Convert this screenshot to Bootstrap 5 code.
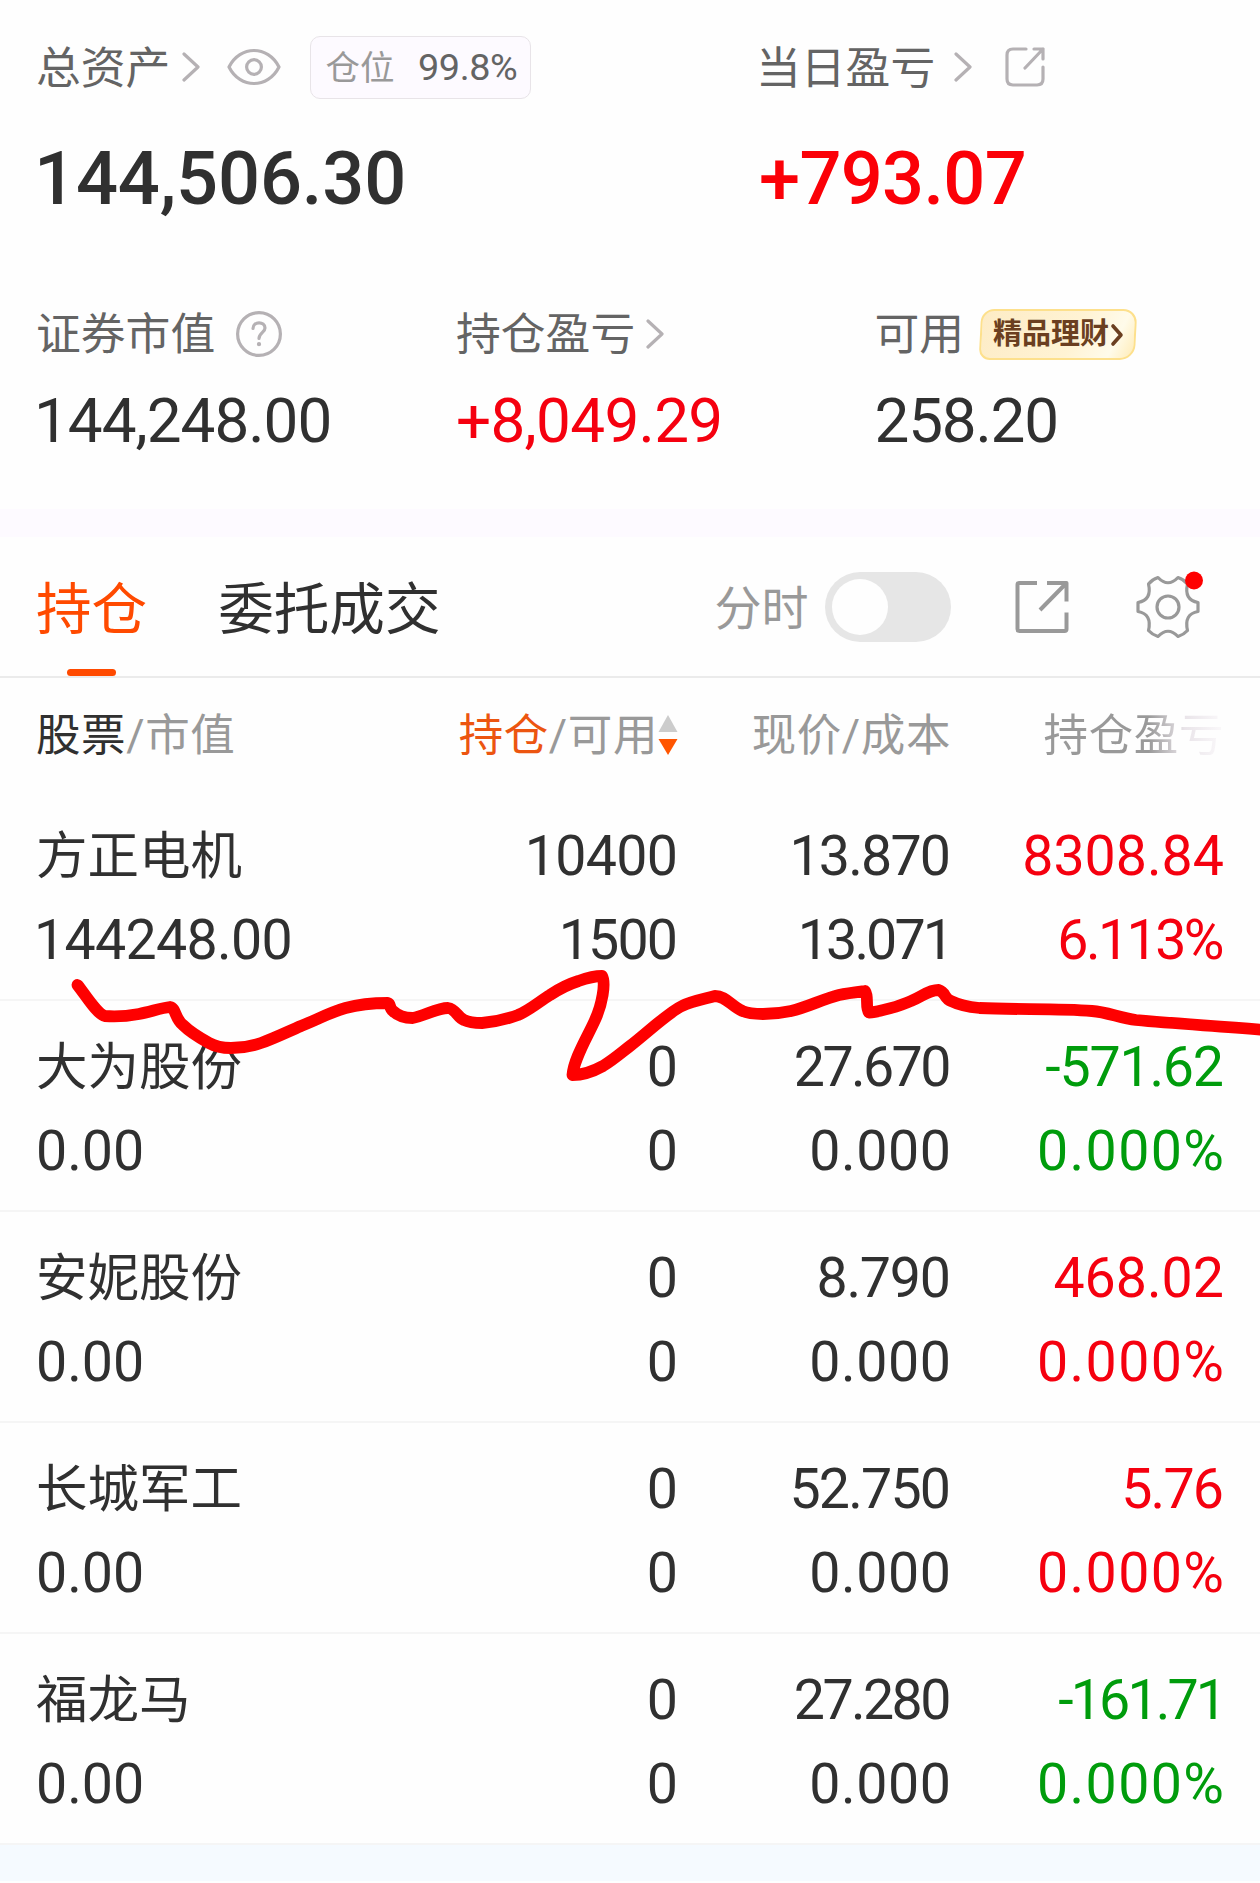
<!DOCTYPE html>
<html lang="zh-CN">
<head>
<meta charset="utf-8">
<meta name="viewport" content="width=device-width, initial-scale=1">
<title>持仓</title>
<link href="https://cdn.jsdelivr.net/npm/bootstrap@5.3.0/dist/css/bootstrap.min.css" rel="stylesheet">
<style>
body{font-family:Roboto,"Noto Sans CJK SC",sans-serif;color:#303030;background:#fefefe;line-height:1;overflow:hidden}
.screen{width:1260px;height:1883px}
.icon{display:block;flex:none;fill:none;stroke:#b5b1b4;stroke-width:3.2;stroke-linecap:round;stroke-linejoin:round}
.up{color:#f5000f}.down{color:#009c0c}.mute{color:#999}
.cap{font-size:44.8px;color:#646464;white-space:nowrap}
.total-head{height:64px;margin-top:35px}
.total-head>.cap,.total-head .lead-in{padding-top:4px}
.lead-in{margin-left:36px}
.assets-head{width:756px}
.share{height:63px;width:221px;border:1px solid #e8e4e8;border-radius:10px;background:#fdfaff;padding:0 13px 0 14px;margin-left:29px}
.share-name{font-size:34.5px;color:#999;padding-top:2px}
.share-num{font-size:37.8px;color:#646464;letter-spacing:-.4px;padding-top:1px}
.chev1{margin-left:11px}.eye{margin-left:26px}
.chev2{margin-left:18px}.share1{margin-left:32px}
.total-nums{height:76px;margin-top:42px;font-size:74px;font-weight:500}
.total-nums .up{color:#fb0007;letter-spacing:-.7px}
.assets-num{width:725px;margin-left:34px;letter-spacing:-.15px}
.sub-sums{margin-top:89px;margin-left:36px}
.third{width:420px}
.sub-sums .cap{height:56px}
.cap-word{padding-top:2px}
.help{margin-left:20px}.chev3{margin-left:10px}
.val{font-size:62px;height:66px;line-height:66px;margin-top:26px}
.first-one{margin-left:-2px}
.promo{width:156px;height:51px;margin-left:16px;border:2.5px solid #fde08c;border-radius:13px 14px 15px 11px;background:linear-gradient(115deg,#fdecc6,#fff3d4 60%,#fffbea 85%,#ffecb8);font-size:29px;font-weight:700;color:#6b3f20;padding-left:11px;transform:skewX(-3deg)}
.promo>*{transform:skewX(3deg)}
.prom-c{stroke:#6b3f20;stroke-width:3.6;margin-left:1px}
.last-third{margin-left:-1.5px}
.band{height:28px;background:#fdfaff;margin-top:55px}
.tabs{height:141px;border-bottom:2px solid #ebebeb;padding-left:36px}
.tab{font-size:55.6px;height:139px;padding:43px 0 0;line-height:60px}
.tab-on{color:#ff4a00}
.tab-on::after{content:"";display:block;width:49px;height:7px;border-radius:4px;background:#ff4a00;margin:29px auto 0}
.tab-b{margin-left:71px}
.tools{margin-left:274px;height:139px}
.minute{font-size:47px;margin-right:16px;padding-top:3px}
.switch{width:126px;height:70px;border-radius:35px;background:#e6e6e6;padding:7px}
.knob{width:56px;height:56px;border-radius:50%;background:#fefefe}
.ext{margin-left:63px;stroke:#999;stroke-width:4;stroke-linecap:butt}
.gear{margin-left:64px;stroke:#999}
.c1{width:340px;padding-left:36px}.c2{width:338px}.c3,.c4{width:273px}
.c2,.c3,.c4{display:flex;flex-direction:column;align-items:flex-end}
.heads{height:112px;font-size:44.5px;letter-spacing:.6px;color:#999;padding-top:33px;line-height:50px;white-space:nowrap}
.text-ink{color:#303030}.sorted{color:#ec5510}
.fade-end{background:linear-gradient(90deg,#999 58%,#e9e4e9 78%,#fbf9fb);-webkit-background-clip:text;background-clip:text;color:transparent}
.stock{height:211px;border-bottom:2px solid #f5f5f5;font-size:55.5px;padding-top:37px}
.stock span{display:block;line-height:60px;height:60px;margin-bottom:24px}
.stock .nm{font-size:51.5px}
.foot{height:36px;background:#f5faff}
.k-34{letter-spacing:-2.9px;margin-right:0}
.k-28{letter-spacing:-2.6px;margin-right:2.2px}.k-20{letter-spacing:-1.8px;margin-right:1.8px}
.k-13{letter-spacing:-1.2px;margin-right:1.2px}.k-6{letter-spacing:-.7px;margin-right:.7px}
.k-10{letter-spacing:-1px}
.k6{letter-spacing:.6px;margin-right:-.6px}.k15{letter-spacing:1.4px;margin-right:-1.4px}
.scribble{left:0;top:960px;pointer-events:none}
</style>
<script src="https://cdn.jsdelivr.net/npm/bootstrap@5.3.0/dist/js/bootstrap.bundle.min.js"></script>
</head>
<body>
<main class="screen position-relative overflow-hidden d-flex flex-column">
  <section class="d-flex align-items-center total-head">
    <div class="assets-head d-flex align-items-center">
      <span class="cap lead-in">总资产</span>
      <svg class="icon chev1" width="20" height="30" viewBox="0 0 20 30"><path d="M3 2L17 15L3 28"/></svg>
      <svg class="icon eye" width="54" height="38" viewBox="0 0 54 38"><path d="M2 19C13-3 41-3 52 19C41 41 13 41 2 19Z"/><circle cx="27" cy="19" r="7.4"/></svg>
      <div class="share d-flex align-items-center justify-content-between"><span class="share-name">仓位</span><span class="share-num">99.8%</span></div>
    </div>
    <span class="cap">当日盈亏</span>
    <svg class="icon chev2" width="20" height="30" viewBox="0 0 20 30"><path d="M3 2L17 15L3 28"/></svg>
    <svg class="icon share1" width="40" height="40" viewBox="0 0 40 40"><path d="M21 2H8Q2 2 2 8V32Q2 38 8 38H32Q38 38 38 32V20M38 12V2H29M38 2L20 21"/></svg>
  </section>
  <section class="d-flex align-items-center total-nums">
    <div class="assets-num">144,506.30</div><div class="up">+793.07</div>
  </section>
  <section class="d-flex sub-sums">
    <div class="third">
      <div class="cap d-flex align-items-center"><span class="cap-word">证券市值</span><svg class="icon help" width="48" height="48" viewBox="0 0 48 48"><circle cx="24" cy="24" r="21.4"/><path d="M18 18.500C18 11 30 11 30 18C30 22.500 24 23 24 28.500"/><circle cx="24" cy="34.200" r="1.400" fill="#b5b1b4" stroke-width="1.500"/></svg></div>
      <div class="val k-10 first-one">144,248.00</div>
    </div>
    <div class="third">
      <div class="cap d-flex align-items-center"><span class="cap-word">持仓盈亏</span><svg class="icon chev3" width="20" height="30" viewBox="0 0 20 30"><path d="M3 2L17 15L3 28"/></svg></div>
      <div class="val up k-6">+8,049.29</div>
    </div>
    <div class="last-third">
      <div class="cap d-flex align-items-center"><span class="cap-word">可用</span><div class="promo d-flex align-items-center"><span>精品理财</span><svg class="icon prom-c" width="15" height="24" viewBox="0 0 15 24"><path d="M3 3L11 12L3 21"/></svg></div></div>
      <div class="val k-13">258.20</div>
    </div>
  </section>
  <div class="band flex-shrink-0"></div>
  <nav class="tabs d-flex flex-shrink-0">
    <div class="tab tab-on">持仓</div>
    <div class="tab tab-b">委托成交</div>
    <div class="d-flex align-items-center tools">
      <span class="mute minute">分时</span>
      <div class="switch"><div class="knob"></div></div>
      <svg class="icon ext" width="56" height="56" viewBox="0 0 56 56"><path d="M23 4H5Q3.500 4 3.500 6V50Q3.500 52 5.500 52H50.500Q52.500 52 52.500 50V33.500M52.500 22.500V4H33M52.500 4L26 31"/></svg>
      <svg class="icon gear" width="72" height="72" viewBox="0 0 72 72"><path d="M24 6.500Q34 17 44 6.500Q50 8.500 53.500 13Q49.800 29 64 31.500V40.500Q49.800 43 53.500 59.500Q50 63.500 44 65.500Q34 55 24 65.500Q18 63.500 14.500 59.500Q18.200 43 4 40.500V31.500Q18.200 29 14.500 13Q18 8.500 24 6.500Z"/><circle cx="34" cy="36" r="11"/><circle cx="60" cy="9.500" r="9" fill="#fe0000" stroke="none"/></svg>
    </div>
  </nav>
  <section class="d-flex heads flex-shrink-0">
    <div class="c1"><span class="text-ink">股票</span>/市值</div>
    <div class="c2"><div class="d-flex align-items-center"><span class="sorted">持仓</span>/可用<svg class="sort" width="20" height="42" viewBox="0 0 20 42"><path d="M10 0L19.500 17H.5Z" fill="#ccc"/><path d="M10 40L19.500 24H.5Z" fill="#ff5500"/></svg></div></div>
    <div class="c3">现价/成本</div>
    <div class="c4"><div class="fade-end">持仓盈亏</div></div>
  </section>
  <section class="d-flex stock flex-shrink-0">
    <div class="c1"><span class="nm">方正电机</span><span class="k-6 first-one">144248.00</span></div>
    <div class="c2"><span class="k-6">10400</span><span class="k-20">1500</span></div>
    <div class="c3"><span class="k-20">13.870</span><span class="k-34">13.071</span></div>
    <div class="c4 up"><span>8308.84</span><span class="k-28">6.113%</span></div>
  </section>
  <section class="d-flex stock flex-shrink-0">
    <div class="c1"><span class="nm">大为股份</span><span>0.00</span></div>
    <div class="c2"><span>0</span><span>0</span></div>
    <div class="c3"><span class="k-28">27.670</span><span class="k6">0.000</span></div>
    <div class="c4 down"><span class="k-13">-571.62</span><span class="k15">0.000%</span></div>
  </section>
  <section class="d-flex stock flex-shrink-0">
    <div class="c1"><span class="nm">安妮股份</span><span>0.00</span></div>
    <div class="c2"><span>0</span><span>0</span></div>
    <div class="c3"><span class="k-13">8.790</span><span class="k6">0.000</span></div>
    <div class="c4 up"><span>468.02</span><span class="k15">0.000%</span></div>
  </section>
  <section class="d-flex stock flex-shrink-0">
    <div class="c1"><span class="nm">长城军工</span><span>0.00</span></div>
    <div class="c2"><span>0</span><span>0</span></div>
    <div class="c3"><span class="k-20">52.750</span><span class="k6">0.000</span></div>
    <div class="c4 up"><span class="k-20">5.76</span><span class="k15">0.000%</span></div>
  </section>
  <section class="d-flex stock flex-shrink-0">
    <div class="c1"><span class="nm">福龙马</span><span>0.00</span></div>
    <div class="c2"><span>0</span><span>0</span></div>
    <div class="c3"><span class="k-28">27.280</span><span class="k6">0.000</span></div>
    <div class="c4 down"><span class="k-34">-161.71</span><span class="k15">0.000%</span></div>
  </section>
  <div class="foot flex-shrink-0"></div>
  <!-- hand-drawn marker line -->
  <svg class="scribble position-absolute" width="1260" height="130" viewBox="0 960 1260 130" fill="none" stroke="#fe0000" stroke-width="11.800" stroke-linecap="round" stroke-linejoin="round"><path d="M77.500 985C87 997 97 1014 105 1016C116 1017 128 1016 139 1014C150 1012 161 1008 170 1007C176 1008 175 1019 183 1025C191 1033 200 1038 209 1043C216 1047 223 1048 231 1048C242 1048 252 1046 261 1043C275 1038 287 1032 301 1026C316 1020 331 1012 345.500 1008C360 1004 374 1003 388 1003C391 1004 389 1008 393 1011C399 1017 406 1018 412.600 1018C424 1016 437 1008 448 1008C456 1009 457 1017 464 1020C470 1023 476 1023 482 1023C495 1022 507 1019 518 1015C530 1010 540 1001 550 995C559 989 569 984 578.500 981C587 978 595 976 602 976C606 983 602 1005 595 1020C588 1036 574 1058 572.500 1075C583 1075 594 1071 603 1066C613 1060 621 1053 630 1046C648 1032 669 1012 682 1006C692 1001 704 999 715 996C726 996 731 1006 742.500 1011C749 1014 756 1014 763 1014C773 1014 782 1013 791 1011C808 1007 823 999 839 995C848 993 857 992 865 991C869 997 865 1007 869 1012.500C879 1012 900 1006 911 1001C922 997 928 990 938.500 990C946 992 944 999 951 1001C959 1005 969 1007 979.500 1008C1017 1010 1057 1008 1092 1011C1107 1012 1120 1018 1136 1020C1177 1024 1220 1026 1265 1030"/></svg>
</main>
</body>
</html>
